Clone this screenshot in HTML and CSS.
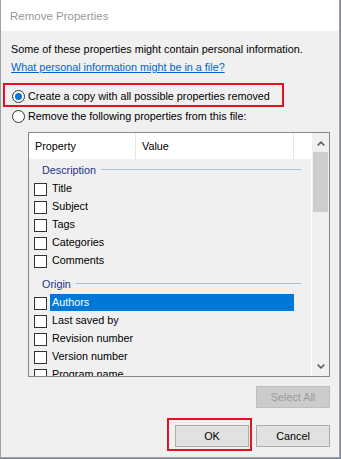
FILE: index.html
```html
<!DOCTYPE html>
<html>
<head>
<meta charset="utf-8">
<link rel="stylesheet" href="styles.css">
</head>
<body>
<div class="window">
  <div class="titlebar">Remove Properties</div>
  <div class="content">
    <p class="intro">Some of these properties might contain personal information.</p>
    <a class="link" href="#">What personal information might be in a file?</a>
    <div class="options">
      <label class="option annotated"><span class="radio checked"></span>Create a copy with all possible properties removed</label>
      <label class="option"><span class="radio"></span>Remove the following properties from this file:</label>
    </div>
    <div class="listbox">
      <div class="list-main">
        <div class="list-header">
          <div class="col col-prop">Property</div>
          <div class="col col-val">Value</div>
          <div class="col col-rest"></div>
        </div>
        <div class="list-body">
          <div class="group"><span>Description</span><i class="rule"></i></div>
          <div class="item"><span class="check"></span><span class="label">Title</span></div>
          <div class="item"><span class="check"></span><span class="label">Subject</span></div>
          <div class="item"><span class="check"></span><span class="label">Tags</span></div>
          <div class="item"><span class="check"></span><span class="label">Categories</span></div>
          <div class="item"><span class="check"></span><span class="label">Comments</span></div>
          <div class="group group-next"><span>Origin</span><i class="rule"></i></div>
          <div class="item"><span class="check"></span><span class="label selected">Authors</span></div>
          <div class="item"><span class="check"></span><span class="label">Last saved by</span></div>
          <div class="item"><span class="check"></span><span class="label">Revision number</span></div>
          <div class="item"><span class="check"></span><span class="label">Version number</span></div>
          <div class="item"><span class="check"></span><span class="label">Program name</span></div>
        </div>
      </div>
      <div class="scrollbar">
        <div class="sb-btn sb-up"><svg width="8" height="5" viewBox="0 0 8 5"><polyline points="0.7,4.4 4,1.2 7.3,4.4" fill="none" stroke="#606060" stroke-width="1.6"/></svg></div>
        <div class="sb-track"><div class="sb-thumb"></div></div>
        <div class="sb-btn sb-down"><svg width="8" height="5" viewBox="0 0 8 5"><polyline points="0.7,0.6 4,3.8 7.3,0.6" fill="none" stroke="#606060" stroke-width="1.6"/></svg></div>
      </div>
    </div>
    <div class="select-row"><button class="btn" disabled>Select All</button></div>
    <div class="footer">
      <button class="btn btn-ok">OK</button>
      <button class="btn">Cancel</button>
    </div>
  </div>
</div>
</body>
</html>
```

FILE: styles.css
```css
html, body {
  margin: 0;
  padding: 0;
}
body {
  width: 341px;
  height: 459px;
  overflow: hidden;
  background: #7d8896;
  font-family: "Liberation Sans", Arial, sans-serif;
  font-size: 10.8px;
  color: #000;
}
.window {
  box-sizing: border-box;
  width: 340px;
  height: 458px;
  border: 1px solid #a0a0a0;
  border-top: 0;
  background: #f0f0f0;
  display: flex;
  flex-direction: column;
}
.titlebar {
  flex: none;
  height: 31px;
  background: #fff;
  color: #999;
  font-size: 11.5px;
  padding-left: 9px;
  display: flex;
  align-items: center;
}
.content {
  flex: 1;
  padding: 9px 9px 0 10px;
}
.intro {
  margin: 0;
  line-height: 18px;
}
.link {
  display: block;
  width: fit-content;
  line-height: 18px;
  color: #0066cc;
  text-decoration: underline;
}
.options {
  margin-top: 10px;
  display: flex;
  flex-direction: column;
}
.option {
  position: relative;
  height: 20px;
  display: flex;
  align-items: center;
}
.radio {
  flex: none;
  box-sizing: border-box;
  width: 13px;
  height: 13px;
  margin-left: 1px;
  margin-right: 3px;
  border: 1px solid #333;
  border-radius: 50%;
  background: #fff;
  display: flex;
  align-items: center;
  justify-content: center;
}
.radio.checked::after {
  content: "";
  width: 7px;
  height: 7px;
  border-radius: 50%;
  background: #0078d7;
}
.annotated::after {
  content: "";
  position: absolute;
  left: -8px;
  top: -3px;
  width: 281px;
  height: 24px;
  box-sizing: border-box;
  border: 2px solid #e81123;
  pointer-events: none;
}
.listbox {
  margin: 6px 0 0 17px;
  width: 302px;
  height: 245px;
  box-sizing: border-box;
  border: 1px solid #828790;
  display: flex;
  overflow: hidden;
}
.list-main {
  width: 282px;
  flex: none;
  display: flex;
  flex-direction: column;
  border-right: 1px solid #fff;
}
.list-header {
  flex: none;
  height: 26px;
  background: #fff;
  display: flex;
}
.col {
  box-sizing: border-box;
  display: flex;
  align-items: center;
  padding-left: 6px;
  border-right: 1px solid #e5e5e5;
}
.col-prop {
  width: 107px;
}
.col-val {
  width: 158px;
}
.col-rest {
  flex: 1;
  border-right: 0;
}
.list-body {
  flex: 1;
  overflow: hidden;
}
.group {
  height: 21px;
  display: flex;
  align-items: center;
  padding-left: 13px;
  color: #1e3287;
}
.group-next {
  margin-top: 3px;
}
.rule {
  flex: 1;
  height: 1px;
  margin: 0 10px 0 5px;
  background: #a9bbe0;
}
.item {
  height: 18px;
  display: flex;
  align-items: center;
  padding-left: 5px;
}
.check {
  flex: none;
  box-sizing: border-box;
  width: 13px;
  height: 13px;
  margin-right: 3px;
  border: 1px solid #333;
  background: #fff;
}
.label {
  align-self: flex-start;
  box-sizing: border-box;
  width: 244px;
  height: 17px;
  line-height: 17px;
  padding-left: 2px;
}
.label.selected {
  background: #0078d7;
  color: #fff;
}
.scrollbar {
  width: 17px;
  flex: none;
  display: flex;
  flex-direction: column;
  background: #f0f0f0;
}
.sb-btn {
  flex: none;
  height: 19px;
  display: flex;
  justify-content: center;
  align-items: center;
}
.sb-up {
  padding-top: 2px;
  box-sizing: border-box;
}
.sb-track {
  flex: 1;
}
.sb-thumb {
  height: 60px;
  margin: 0 1px;
  background: #cdcdcd;
}
.select-row {
  margin-top: 9px;
  display: flex;
  justify-content: flex-end;
}
.btn {
  width: 74px;
  height: 22px;
  box-sizing: border-box;
  padding: 0;
  font: inherit;
  color: #000;
  background: #e1e1e1;
  border: 1px solid #adadad;
}
.btn:disabled {
  background: #cccccc;
  border-color: #bfbfbf;
  color: #9a9a9a;
}
.footer {
  margin-top: 17px;
  display: flex;
  justify-content: flex-end;
  gap: 7px;
}
.btn-ok {
  position: relative;
}
.btn-ok::after {
  content: "";
  position: absolute;
  left: -9px;
  top: -8px;
  width: 85px;
  height: 33px;
  box-sizing: border-box;
  border: 2px solid #e81123;
  pointer-events: none;
}
```
